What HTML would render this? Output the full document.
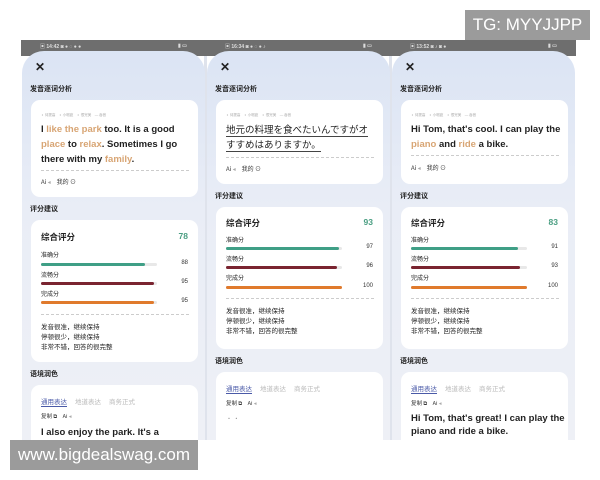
<!DOCTYPE html>
<html><head><meta charset="utf-8"><style>
*{margin:0;padding:0;box-sizing:border-box}
body{width:600px;height:480px;background:#fff;position:relative;overflow:hidden;font-family:"Liberation Sans","Noto Sans CJK SC",sans-serif;color:#222}
.strip{position:absolute;left:21px;top:40px;width:555px;height:16px;background:#6e6e6e}
.gap{position:absolute;top:56px;width:3px;height:384px;background:#dfe3ec}
.panel{position:absolute;top:51px;width:183px;height:389px;border-radius:22px 22px 0 0;background:linear-gradient(180deg,#dbe4f4 0%,#e9edf6 40%,#eef0f6 100%);overflow:hidden}
.sb{position:absolute;top:43px;font-size:5px;color:#ddd;font-weight:bold}
.x{position:absolute;left:13px;top:9px;font-size:12px;font-weight:bold;color:#222}
.h{position:absolute;left:8px;font-size:7px;font-weight:bold;color:#222;font-family:"Noto Sans CJK SC",sans-serif}
.card{position:absolute;left:9px;width:167px;background:#fff;border-radius:9px}
.leg{position:absolute;left:10px;font-size:3.5px;color:#aaa;white-space:nowrap}
.txt{position:absolute;left:10px;font-size:9.5px;font-weight:bold;line-height:15px;color:#222;width:155px}
.o{color:#d8a574}
.dash{position:absolute;left:10px;width:148px;border-top:1px dashed #ccc}
.ai{position:absolute;left:10px;font-size:6px;color:#333;font-family:"Noto Sans CJK SC",sans-serif;white-space:nowrap}
.big{position:absolute;left:10px;font-size:8.5px;font-weight:bold;font-family:"Noto Sans CJK SC",sans-serif}
.sc{position:absolute;right:10px;font-size:8.5px;font-weight:bold;color:#4a9e82}
.lb{position:absolute;left:10px;font-size:6px;font-family:"Noto Sans CJK SC",sans-serif;color:#222}
.track{position:absolute;left:10px;width:116px;height:3px;background:#e8e8e8;border-radius:2px}
.bar{height:3px;border-radius:2px}
.num{position:absolute;right:10px;font-size:6px;color:#333}
.fb{position:absolute;left:10px;font-size:6.5px;line-height:10px;font-family:"Noto Sans CJK SC",sans-serif;color:#222}
.tabs{position:absolute;left:10px;font-size:6.5px;font-family:"Noto Sans CJK SC",sans-serif;color:#bbb;white-space:nowrap}
.tabs b{font-weight:normal;color:#4a5aa8;border-bottom:1px solid #4a5aa8;margin-right:8px}
.tabs i{font-style:normal;margin-right:8px}
.wm{position:absolute;background:#9b9b9b;color:#fff;font-size:17px;font-family:"Liberation Sans",sans-serif}
</style></head><body>
<div class="strip"></div>
<div class="gap" style="left:204px"></div><div class="gap" style="left:389px"></div>
<div class="sb" style="left:40px">▣ 14:42 ◙ ● ◌ ● ●</div><div class="sb" style="left:178px">▮ ▭</div>
<div class="sb" style="left:225px">▣ 16:34 ◙ ● ◌ ● ♪</div><div class="sb" style="left:363px">▮ ▭</div>
<div class="sb" style="left:410px">▣ 13:52 ◙ ♪ ◙ ●</div><div class="sb" style="left:548px">▮ ▭</div>

<div class="panel" style="left:22px">
<div class="x">✕</div>
<div class="h" style="top:33px">发音逐词分析</div>
<div class="card" style="top:49px;height:97px">
<div class="leg" style="top:13px">⚬ 待提高　⚬ 小瑕疵　⚬ 很完美　— 吞音</div>
<div class="txt" style="top:22px">I <span class="o">like the park</span> too. It is a good <span class="o">place</span> to <span class="o">relax</span>. Sometimes I go there with my <span class="o">family</span>.</div>
<div class="dash" style="top:70px"></div>
<div class="ai" style="top:77px">Ai <span style="color:#aaa">◂</span>　我的 ⊙</div>
</div>
<div class="h" style="top:153px">评分建议</div>
<div class="card" style="top:169px;height:142px">
<div class="big" style="top:11px">综合评分</div><div class="sc" style="top:11px">78</div>
<div class="lb" style="top:30px">准确分</div><div class="track" style="top:43px"><div class="bar" style="width:90%;background:#3f9f86"></div></div><div class="num" style="top:40px">88</div>
<div class="lb" style="top:50px">流畅分</div><div class="track" style="top:62px"><div class="bar" style="width:97%;background:#7a2430"></div></div><div class="num" style="top:59px">95</div>
<div class="lb" style="top:69px">完成分</div><div class="track" style="top:81px"><div class="bar" style="width:97%;background:#e07a2c"></div></div><div class="num" style="top:78px">95</div>
<div class="dash" style="top:94px"></div>
<div class="fb" style="top:101px">发音很准，继续保持<br>停顿很少，继续保持<br>非常不错，回答的很完整</div>
</div>
<div class="h" style="top:318px">语境润色</div>
<div class="card" style="top:334px;height:70px">
<div class="tabs" style="top:11px"><b>通用表达</b><i>地道表达</i><i>商务正式</i></div>
<div class="ai" style="top:27px;font-size:5.5px">复制 ⧉　Ai <span style="color:#aaa">◂</span></div>
<div class="txt" style="top:40px">I also enjoy the park. It's a</div>
</div>
</div>

<div class="panel" style="left:207px">
<div class="x">✕</div>
<div class="h" style="top:33px">发音逐词分析</div>
<div class="card" style="top:49px;height:84px">
<div class="leg" style="top:13px">⚬ 待提高　⚬ 小瑕疵　⚬ 很完美　— 吞音</div>
<div class="txt" style="top:22px;font-weight:normal;font-family:'Noto Sans CJK JP',sans-serif;font-size:9.5px"><span style="border-bottom:1px solid #444">地元の料理を食べたいんですがオ</span><br><span style="border-bottom:1px solid #444">すすめはありますか。</span></div>
<div class="dash" style="top:57px"></div>
<div class="ai" style="top:64px">Ai <span style="color:#aaa">◂</span>　我的 ⊙</div>
</div>
<div class="h" style="top:140px">评分建议</div>
<div class="card" style="top:156px;height:142px">
<div class="big" style="top:10px">综合评分</div><div class="sc" style="top:10px">93</div>
<div class="lb" style="top:28px">准确分</div><div class="track" style="top:40px"><div class="bar" style="width:97%;background:#3f9f86"></div></div><div class="num" style="top:37px">97</div>
<div class="lb" style="top:47px">流畅分</div><div class="track" style="top:59px"><div class="bar" style="width:96%;background:#7a2430"></div></div><div class="num" style="top:56px">96</div>
<div class="lb" style="top:66px">完成分</div><div class="track" style="top:79px"><div class="bar" style="width:100%;background:#e07a2c"></div></div><div class="num" style="top:76px">100</div>
<div class="dash" style="top:91px"></div>
<div class="fb" style="top:98px">发音很准，继续保持<br>停顿很少，继续保持<br>非常不错，回答的很完整</div>
</div>
<div class="h" style="top:305px">语境润色</div>
<div class="card" style="top:321px;height:80px">
<div class="tabs" style="top:11px"><b>通用表达</b><i>地道表达</i><i>商务正式</i></div>
<div class="ai" style="top:27px;font-size:5.5px">复制 ⧉　Ai <span style="color:#aaa">◂</span></div>
<div class="ai" style="top:42px;color:#999">· ·</div>
</div>
</div>

<div class="panel" style="left:392px">
<div class="x">✕</div>
<div class="h" style="top:33px">发音逐词分析</div>
<div class="card" style="top:49px;height:84px">
<div class="leg" style="top:13px">⚬ 待提高　⚬ 小瑕疵　⚬ 很完美　— 吞音</div>
<div class="txt" style="top:22px">Hi Tom, that's cool. I can play the <span class="o">piano</span> and <span class="o">ride</span> a bike.</div>
<div class="dash" style="top:55px"></div>
<div class="ai" style="top:63px">Ai <span style="color:#aaa">◂</span>　我的 ⊙</div>
</div>
<div class="h" style="top:140px">评分建议</div>
<div class="card" style="top:156px;height:142px">
<div class="big" style="top:10px">综合评分</div><div class="sc" style="top:10px">83</div>
<div class="lb" style="top:28px">准确分</div><div class="track" style="top:40px"><div class="bar" style="width:92%;background:#3f9f86"></div></div><div class="num" style="top:37px">91</div>
<div class="lb" style="top:47px">流畅分</div><div class="track" style="top:59px"><div class="bar" style="width:94%;background:#7a2430"></div></div><div class="num" style="top:56px">93</div>
<div class="lb" style="top:66px">完成分</div><div class="track" style="top:79px"><div class="bar" style="width:100%;background:#e07a2c"></div></div><div class="num" style="top:76px">100</div>
<div class="dash" style="top:91px"></div>
<div class="fb" style="top:98px">发音很准，继续保持<br>停顿很少，继续保持<br>非常不错，回答的很完整</div>
</div>
<div class="h" style="top:305px">语境润色</div>
<div class="card" style="top:321px;height:80px">
<div class="tabs" style="top:11px"><b>通用表达</b><i>地道表达</i><i>商务正式</i></div>
<div class="ai" style="top:27px;font-size:5.5px">复制 ⧉　Ai <span style="color:#aaa">◂</span></div>
<div class="txt" style="top:40px;line-height:13px">Hi Tom, that's great! I can play the piano and ride a bike.</div>
</div>
</div>

<div class="wm" style="left:465px;top:10px;width:125px;height:30px;line-height:30px;text-align:center">TG: MYYJJPP</div>
<div class="wm" style="left:10px;top:440px;width:188px;height:30px;line-height:30px;text-align:center">www.bigdealswag.com</div>
</body></html>
